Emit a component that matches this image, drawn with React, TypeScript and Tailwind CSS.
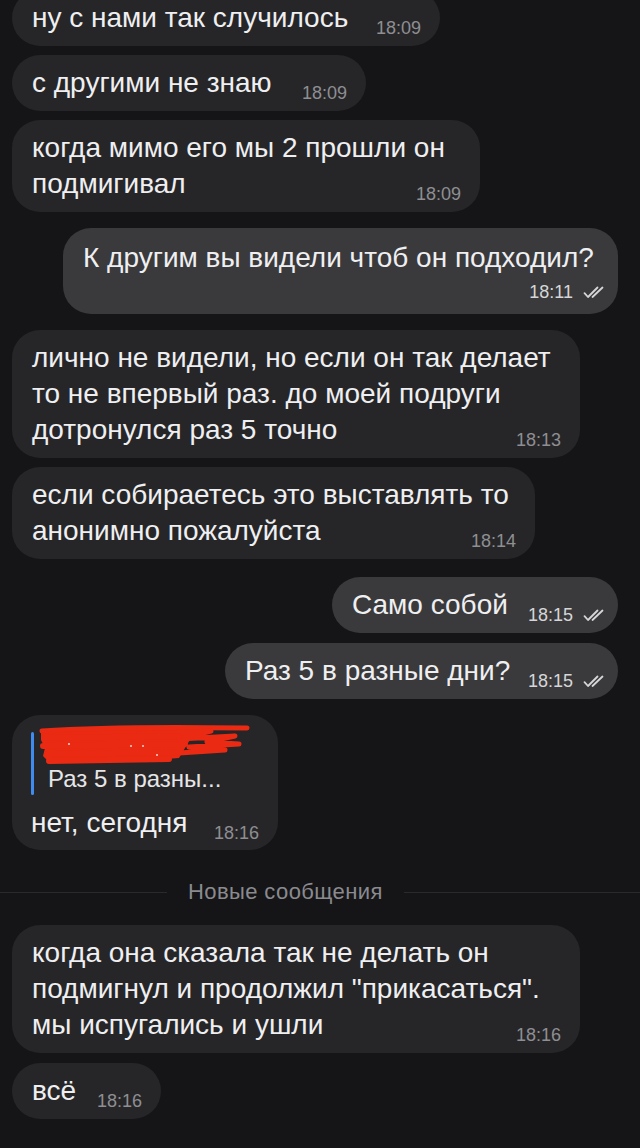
import React from "react";

function Checks() {
  return (
    <svg width="24" height="13" viewBox="0 0 24 13" className="ml-[10px]" fill="none">
      <path d="M1.5 7.2 L5 11 L14.5 1.5" stroke="#d6d6d8" strokeWidth="1.8" strokeLinecap="round" strokeLinejoin="round" />
      <path d="M9.5 11 L19.5 1.5" stroke="#d6d6d8" strokeWidth="1.8" strokeLinecap="round" strokeLinejoin="round" />
    </svg>
  );
}

function Time({ t, out, cls }: { t: string; out?: boolean; cls?: string }) {
  return (
    <span
      className={`${
        out
          ? "inline-flex items-center whitespace-nowrap text-[18px] leading-[17px] text-[#d6d6d8]"
          : "inline-flex items-center whitespace-nowrap text-[18px] leading-[17px] text-[#8e8e93]"
      } ${cls ?? ""}`}
    >
      {t}
      {out && <Checks />}
    </span>
  );
}

function In({ lines, t, w, cls }: { lines: string[]; t: string; w: string; cls?: string }) {
  const last = lines[lines.length - 1];
  return (
    <div className={`self-start rounded-[28px] bg-[#262628] pl-5 pr-[19px] py-[10px] text-[28px] leading-[36px] text-[#efeff1] ${w} ${cls ?? ""}`}>
      {lines.slice(0, -1).map((l, i) => (
        <div key={i} className="whitespace-nowrap">{l}</div>
      ))}
      <div className="flex items-end">
        <span className="whitespace-nowrap">{last}</span>
        <Time t={t} cls="ml-auto pl-4 mb-[-1px]" />
      </div>
    </div>
  );
}

function Out({ text, t, w, cls }: { text: string; t: string; w: string; cls?: string }) {
  return (
    <div className={`self-end mr-[10px] flex items-end rounded-[28px] bg-[#3a3a3c] pl-5 pr-[11px] py-[10px] text-[28px] leading-[36px] text-[#efeff1] ${w} ${cls ?? ""}`}>
      <span className="whitespace-nowrap">{text}</span>
      <Time t={t} out cls="ml-auto pl-4 mb-[-1px]" />
    </div>
  );
}

export default function App() {
  return (
    <div className="min-h-[1148px] w-[640px] overflow-hidden bg-[#151517] font-['Liberation_Sans',Arial,sans-serif]">
      <div className="flex flex-col px-3">
        <In lines={["ну с нами так случилось"]} t="18:09" w="w-[428px]" cls="-mt-[10px]" />
        <In lines={["с другими не знаю"]} t="18:09" w="w-[354px]" cls="mt-[9px]" />
        <In lines={["когда мимо его мы 2 прошли он", "подмигивал"]} t="18:09" w="w-[468px]" cls="mt-[9px]" />

        <div className="self-end mr-[10px] mt-[16px] w-[555px] rounded-[28px] bg-[#3a3a3c] pl-5 pr-[11px] pt-[12px] pb-[11px] text-[28px] leading-[36px] text-[#efeff1]">
          <div className="whitespace-nowrap">К другим вы видели чтоб он подходил?</div>
          <div className="mt-[5px] flex h-[22px] items-center justify-end">
            <Time t="18:11" out />
          </div>
        </div>

        <In
          lines={["лично не видели, но если он так делает", "то не впервый раз. до моей подруги", "дотронулся раз 5 точно"]}
          t="18:13"
          w="w-[568px]"
          cls="mt-[16px]"
        />
        <In lines={["если собираетесь это выставлять то", "анонимно пожалуйста"]} t="18:14" w="w-[523px]" cls="mt-[9px]" />

        <Out text="Само собой" t="18:15" w="w-[286px]" cls="mt-[18px]" />
        <Out text="Раз 5 в разные дни?" t="18:15" w="w-[393px]" cls="mt-[10px]" />

        <div className="self-start mt-[16px] w-[266px] rounded-[28px] bg-[#262628] pl-[19px] pr-[19px] pt-[17px] pb-[9px] text-[#efeff1]">
          <div className="relative flex h-[63px]">
            <div className="w-[3px] rounded-full bg-[#3f8cf0]" />
            <div className="ml-[14px] flex flex-col">
              <div className="h-[30px]" />
              <div className="whitespace-nowrap text-[24px] leading-[33px] text-[#e6e6e8]">Раз 5 в разны...</div>
            </div>
            <svg
              viewBox="0 0 212 44"
              className="absolute left-[8px] top-[-10px] h-[44px] w-[212px]"
              fill="none"
            >
              <path
                d="M2 11 C30 7 70 6 110 7 L150 8 L152 16 L146 26 L140 36 L100 39 L50 41 L10 40 L4 34 L6 26 L2 18 Z"
                fill="#ea2a12"
              />
              <path
                d="M3 9 C60 5 140 5 208 6"
                stroke="#ea2a12"
                strokeWidth="5"
                strokeLinecap="round"
              />
              <path
                d="M100 12 L172 9 L140 17 L196 14 L168 20 L200 22 L150 25 L186 28 L140 31"
                stroke="#ea2a12"
                strokeWidth="5"
                strokeLinecap="round"
                strokeLinejoin="round"
              />
              <path
                d="M6 16 L140 14 M4 24 L146 22 M8 32 L142 30 M10 39 L130 37"
                stroke="#ea2a12"
                strokeWidth="6"
                strokeLinecap="round"
              />
              <circle cx="30" cy="22" r="1" fill="#f3d6d0" />
              <circle cx="92" cy="24" r="1" fill="#f3d6d0" />
              <circle cx="104" cy="24" r="1" fill="#f3d6d0" />
              <circle cx="118" cy="33" r="1" fill="#f3d6d0" />
            </svg>
          </div>
          <div className="mt-[10px] flex items-end text-[28px] leading-[36px]">
            <span className="whitespace-nowrap">нет, сегодня</span>
            <Time t="18:16" cls="ml-auto pl-4 mb-[-1px]" />
          </div>
        </div>

        <div className="-mx-3 mt-[30px] flex h-[24px] items-center">
          <div className="h-px w-[167px] bg-[#2a2a2d]" />
          <div className="mx-[21px] whitespace-nowrap text-[22px] leading-[24px] tracking-[0.4px] text-[#8a8a8f]">Новые сообщения</div>
          <div className="h-px flex-1 bg-[#2a2a2d]" />
        </div>

        <In
          lines={["когда она сказала так не делать он", "подмигнул и продолжил \"прикасаться\".", "мы испугались и ушли"]}
          t="18:16"
          w="w-[568px]"
          cls="mt-[21px]"
        />
        <In lines={["всё"]} t="18:16" w="w-[149px]" cls="mt-[10px]" />
      </div>
    </div>
  );
}
